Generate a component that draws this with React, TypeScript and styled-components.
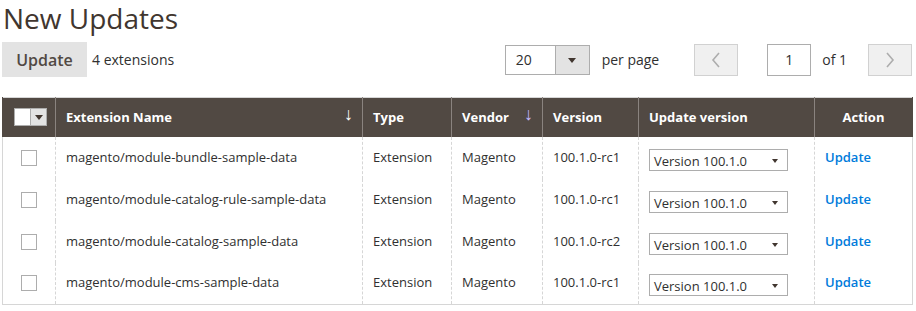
import React from "react";
import styled, { createGlobalStyle } from "styled-components";

const Global = createGlobalStyle`
  html, body { margin: 0; padding: 0; background: #fff; }
  body { font-family: "Open Sans", "Liberation Sans", sans-serif; color: #303030; }
`;

const Page = styled.div`
  padding: 0 4px 0 2px;
  width: 910px;
`;

const Title = styled.h1`
  margin: 0;
  padding: 0 0 0 1px;
  font-size: 28px;
  font-weight: 400;
  line-height: 36px;
  height: 34px;
  color: #41362f;
`;

const Toolbar = styled.div`
  display: flex;
  align-items: center;
  margin-top: 8px;
  height: 35px;
`;

const ActionButton = styled.button`
  height: 35px;
  width: 85px;
  border: none;
  background: #e3e3e3;
  color: #514943;
  font-family: inherit;
  font-size: 16px;
  font-weight: 600;
  padding: 0;
`;

const Count = styled.span`
  margin-left: 5px;
  font-size: 14px;
  color: #303030;
`;

const Spacer = styled.div<{ $w?: number }>`
  flex: ${(p) => (p.$w ? `0 0 ${p.$w}px` : "1")};
`;

const PerPage = styled.div`
  display: flex;
  height: 30px;
  width: 85px;
  border: 1px solid #adadad;
  box-sizing: border-box;
  margin-top: 1px;
`;

const PerPageValue = styled.div`
  flex: 1;
  font-size: 14px;
  line-height: 28px;
  padding-left: 10px;
  color: #303030;
`;

const PerPageToggle = styled.div`
  width: 33px;
  background: #e3e3e3;
  border-left: 1px solid #adadad;
  display: flex;
  align-items: center;
  justify-content: center;
`;

const Triangle = styled.span<{ $size?: number }>`
  width: 0;
  height: 0;
  border-left: ${(p) => p.$size ?? 4}px solid transparent;
  border-right: ${(p) => p.$size ?? 4}px solid transparent;
  border-top: ${(p) => (p.$size ?? 4) + 1}px solid #41362f;
`;

const Label = styled.span<{ $ml: number; $mr?: number }>`
  font-size: 14px;
  color: #303030;
  margin-left: ${(p) => p.$ml}px;
  margin-right: ${(p) => p.$mr ?? 0}px;
`;

const PageButton = styled.div`
  width: 44px;
  height: 32px;
  box-sizing: border-box;
  border: 1px solid #d1d1d1;
  background: #f0f0f0;
  display: flex;
  align-items: center;
  justify-content: center;
`;

const PageInput = styled.div`
  width: 44px;
  height: 32px;
  box-sizing: border-box;
  border: 1px solid #adadad;
  background: #fff;
  font-size: 14px;
  line-height: 30px;
  text-align: center;
  color: #303030;
`;

const Table = styled.table`
  margin-top: 20px;
  width: 910px;
  border-collapse: collapse;
  table-layout: fixed;
  border: 1px solid #d6d6d6;
`;

const Th = styled.th<{ $w: number; $center?: boolean }>`
  width: ${(p) => p.$w}px;
  background: #514943;
  color: #fff;
  font-size: 13px;
  font-weight: 700;
  text-align: ${(p) => (p.$center ? "center" : "left")};
  padding: 0 10px;
  height: 39px;
  box-sizing: border-box;
  border-left: 1px solid #8a837f;
  border-right: 1px solid #8a837f;
  position: relative;
  &:first-child { border-left-color: #514943; }
  &:last-child { border-right-color: #514943; }
`;

const SortArrow = styled.span<{ $active?: boolean }>`
  position: absolute;
  right: 9px;
  top: 3px;
  font-size: 18px;
  font-weight: 400;
  color: ${(p) => (p.$active ? "#c5b8ff" : "#fff")};
`;

const MassSelect = styled.div`
  display: flex;
  width: 31px;
  height: 16px;
  border: 1px solid #adadad;
  margin-left: 1px;
`;

const MassBox = styled.div`
  width: 15px;
  background: #fff;
`;

const MassToggle = styled.div`
  flex: 1;
  background: #e3e3e3;
  border-left: 1px solid #adadad;
  display: flex;
  align-items: center;
  justify-content: center;
`;

const Td = styled.td`
  height: 42px;
  box-sizing: border-box;
  padding: 0 10px 2px 10px;
  font-size: 13px;
  color: #303030;
  vertical-align: middle;
  border-left: 1px dashed #d6d6d6;
  border-right: 1px dashed #d6d6d6;
  white-space: nowrap;
  &:first-child { border-left: 1px solid #d6d6d6; }
  &:last-child { border-right: 1px solid #d6d6d6; }
`;

const Check = styled.div`
  width: 16px;
  height: 16px;
  box-sizing: border-box;
  border: 1px solid #adadad;
  background: #fff;
  margin-left: 8px;
  margin-top: 2px;
`;

const VersionSelect = styled.div`
  display: flex;
  align-items: center;
  justify-content: space-between;
  width: 139px;
  height: 22px;
  box-sizing: border-box;
  border: 1px solid #adadad;
  padding: 2px 9px 0 4px;
  margin-top: 6px;
  font-size: 13px;
  color: #303030;
`;

const UpdateLink = styled.a`
  color: #007bdb;
  font-weight: 600;
  font-size: 13px;
  text-decoration: none;
`;

const Chevron = ({ dir }: { dir: "left" | "right" }) => (
  <svg width="10" height="16" viewBox="0 0 10 16">
    <path
      d={dir === "left" ? "M8 1 L2 8 L8 15" : "M2 1 L8 8 L2 15"}
      fill="none"
      stroke="#adadad"
      strokeWidth="1.6"
    />
  </svg>
);

const rows = [
  { name: "magento/module-bundle-sample-data", version: "100.1.0-rc1" },
  { name: "magento/module-catalog-rule-sample-data", version: "100.1.0-rc1" },
  { name: "magento/module-catalog-sample-data", version: "100.1.0-rc2" },
  { name: "magento/module-cms-sample-data", version: "100.1.0-rc1" },
];

export default function App() {
  return (
    <>
      <Global />
      <Page>
        <Title>New Updates</Title>
        <Toolbar>
          <ActionButton>Update</ActionButton>
          <Count>4 extensions</Count>
          <Spacer />
          <PerPage>
            <PerPageValue>20</PerPageValue>
            <PerPageToggle>
              <Triangle $size={4} />
            </PerPageToggle>
          </PerPage>
          <Label $ml={12} $mr={35}>per page</Label>
          <PageButton>
            <Chevron dir="left" />
          </PageButton>
          <Spacer $w={29} />
          <PageInput>1</PageInput>
          <Label $ml={11} $mr={21}>of 1</Label>
          <PageButton>
            <Chevron dir="right" />
          </PageButton>
        </Toolbar>
        <Table>
          <thead>
            <tr>
              <Th $w={53}>
                <MassSelect>
                  <MassBox />
                  <MassToggle>
                    <Triangle $size={4} />
                  </MassToggle>
                </MassSelect>
              </Th>
              <Th $w={307}>
                Extension Name
                <SortArrow>↓</SortArrow>
              </Th>
              <Th $w={89}>Type</Th>
              <Th $w={91}>
                Vendor
                <SortArrow $active>↓</SortArrow>
              </Th>
              <Th $w={96}>Version</Th>
              <Th $w={176}>Update version</Th>
              <Th $w={98} $center>
                Action
              </Th>
            </tr>
          </thead>
          <tbody>
            {rows.map((r) => (
              <tr key={r.name}>
                <Td>
                  <Check />
                </Td>
                <Td>{r.name}</Td>
                <Td>Extension</Td>
                <Td>Magento</Td>
                <Td>{r.version}</Td>
                <Td>
                  <VersionSelect>
                    <span>Version 100.1.0</span>
                    <Triangle $size={3} />
                  </VersionSelect>
                </Td>
                <Td>
                  <UpdateLink href="#">Update</UpdateLink>
                </Td>
              </tr>
            ))}
          </tbody>
        </Table>
      </Page>
    </>
  );
}
